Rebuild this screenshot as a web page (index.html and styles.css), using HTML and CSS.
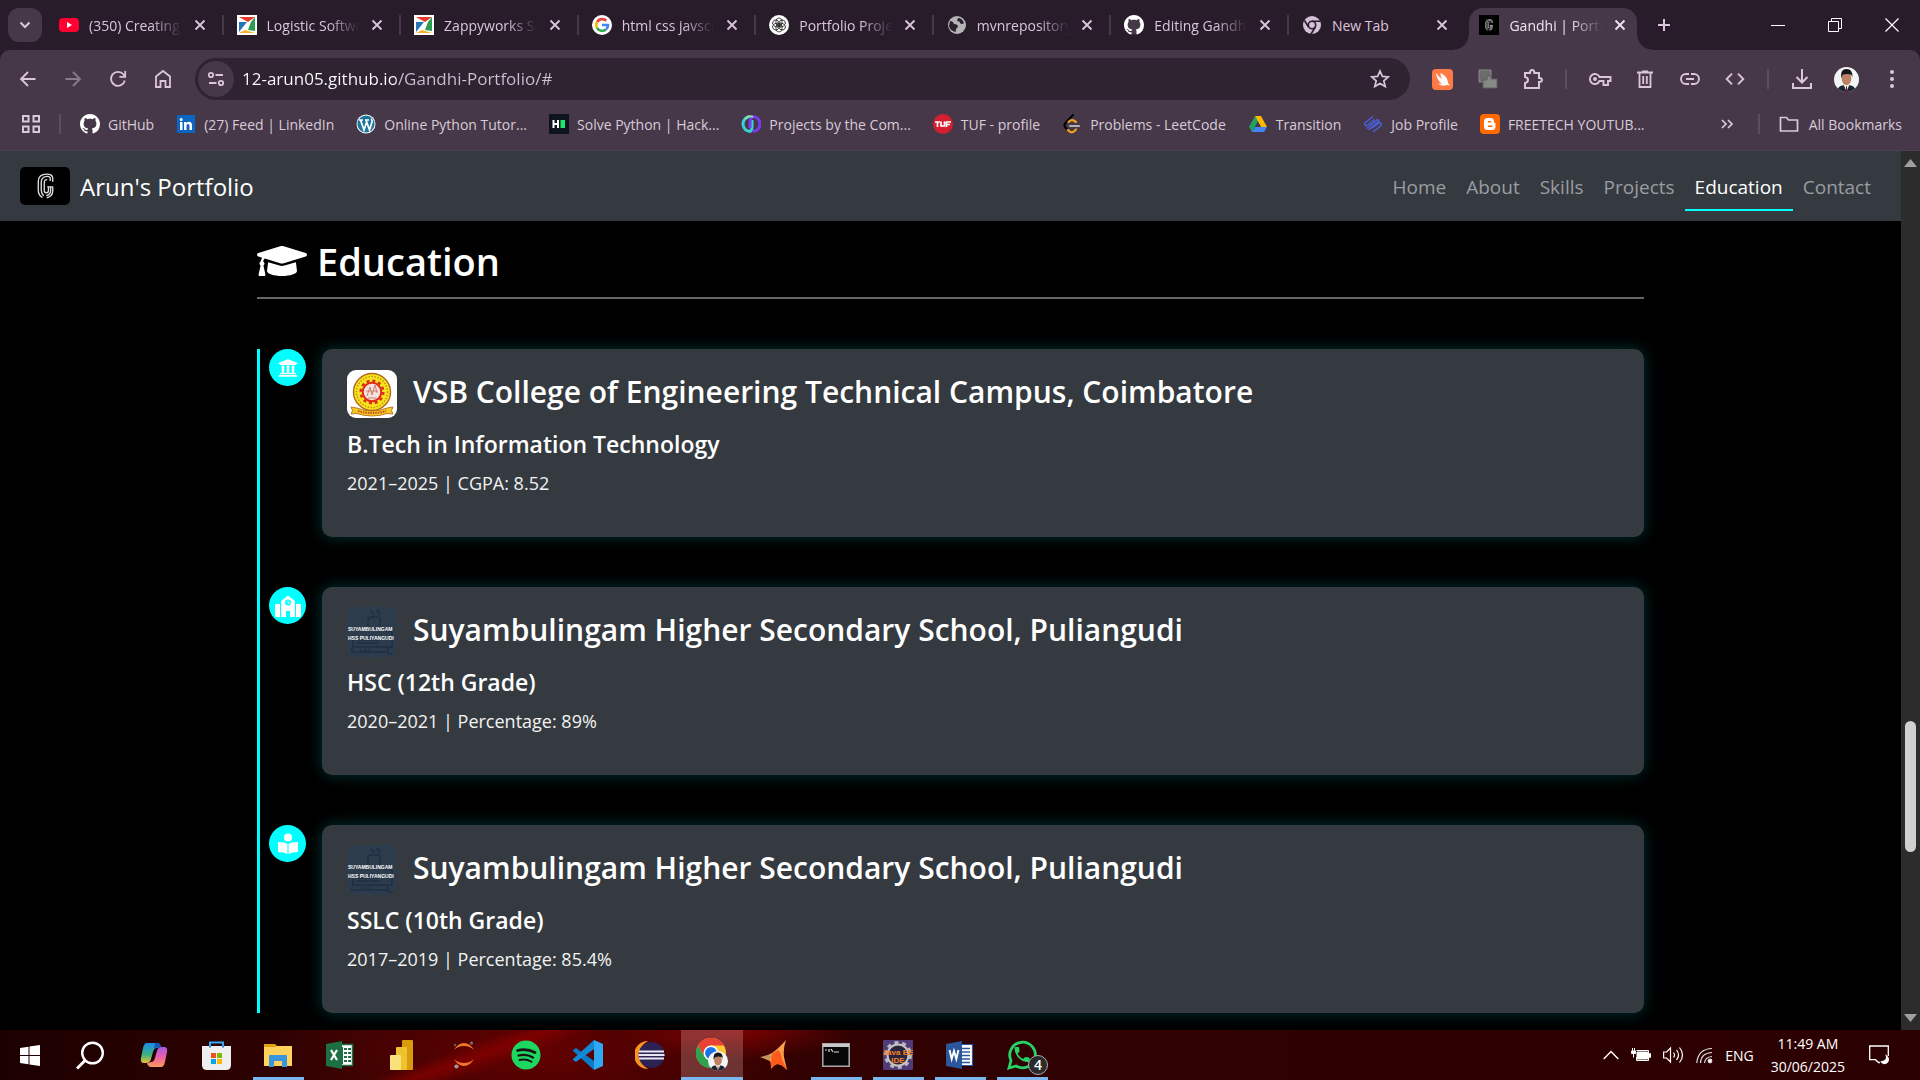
FILE: index.html
```html
<!DOCTYPE html>
<html lang="en">
<head>
<meta charset="utf-8">
<meta name="viewport" content="width=device-width, initial-scale=1">
<title>Gandhi | Portfolio</title>
<link rel="stylesheet" href="styles.css">
</head>
<body>
<svg class="defs" aria-hidden="true">
  <symbol id="i-close" viewBox="0 0 12 12"><path d="M1.5 1.5l9 9M10.500 1.500l-9 9" fill="none" stroke="currentColor" stroke-width="1.800"/></symbol>
  <symbol id="i-github" viewBox="0 0 16 16"><circle cx="8" cy="8" r="7.500" fill="#463848"/><path fill="#fff" d="M8 0C3.580 0 0 3.580 0 8c0 3.540 2.290 6.530 5.470 7.590.4.070.55-.17.55-.38 0-.19-.01-.82-.01-1.490-2.010.37-2.530-.49-2.690-.94-.09-.23-.48-.94-.82-1.130-.28-.15-.68-.52-.01-.53.63-.01 1.080.58 1.230.82.720 1.210 1.870.87 2.330.66.070-.52.280-.87.510-1.070-1.780-.2-3.640-.89-3.640-3.950 0-.87.310-1.590.82-2.150-.08-.2-.36-1.020.08-2.120 0 0 .67-.21 2.200.82.640-.18 1.320-.27 2-.27s1.360.09 2 .27c1.530-1.040 2.200-.82 2.200-.82.440 1.100.16 1.920.08 2.120.51.560.82 1.270.82 2.150 0 3.070-1.870 3.750-3.650 3.950.29.250.54.730.54 1.480 0 1.070-.01 1.930-.01 2.200 0 .21.150.46.550.38A8.010 8.010 0 0 0 16 8c0-4.420-3.580-8-8-8z"/></symbol>
  <symbol id="i-zappy" viewBox="0 0 20 20"><path fill="#fff" d="M0 0h20v20H0z"/><path fill="#e23b2e" d="M2 2h16l-7 5z"/><path fill="#2a9d4e" d="M18 2v14l-7-1 3-8z"/><path fill="#2476b8" d="M2 7v10l8-10z"/><path fill="#f3b229" d="M2 18l6-3 10 3z"/></symbol>
  <symbol id="i-g" viewBox="0 0 20 30"><g fill="none" stroke="#ddd" stroke-width="1.600"><path d="M18.500 10V6q0-5-7-5Q1.500 1 1.500 10v10q0 6 5 8.500"/><path d="M15.500 9V5Q13 3 10 4q-5 1-5 7v9q0 4 3 6.500"/><path d="M12 7.500Q8.500 7 8.500 12v8q0 3 2.500 3t2.500-3v-4"/><path d="M18.500 16v5q0 6-7 8M16 16v5q0 4-5 5.500M12 16h7"/></g></symbol>
  <symbol id="i-person" viewBox="0 0 26 26"><clipPath id="pc"><circle cx="13" cy="13" r="13"/></clipPath><g clip-path="url(#pc)"><path fill="#f4f5f6" d="M0 0h26v26H0z"/><path fill="#1b2431" d="M3 26q1-7 7-7h6q6 0 7 7z"/><path fill="#fff" d="M10 18h6l-3 8z"/><path fill="#6e1f25" d="M12.500 20h1l.5 6h-2z"/><ellipse cx="13" cy="12" rx="5" ry="7" fill="#bd8263"/><path fill="#16161a" d="M7.500 12Q6 2 13 2t6 9l-1-3q-4-1.500-9 0z"/></g></symbol>
  <symbol id="i-chrome" viewBox="0 0 32 32"><circle cx="16" cy="16" r="16" fill="#fcc934"/><path fill="#e94235" d="M2.100 8A16 16 0 0 1 29.900 8H16L9 20z"/><path fill="#2da34f" d="M2.100 8A16 16 0 0 0 16 32l7-12H9z"/><circle cx="16" cy="16" r="8" fill="#fff"/><circle cx="16" cy="16" r="6.300" fill="#1a73e8"/></symbol>
</svg>

<header class="browser">
  <div class="tabstrip">
    <button class="tab-search" aria-label="Search tabs"><svg width="12" height="8" viewBox="0 0 12 8"><path d="M1.500 1.500L6 6l4.500-4.500" fill="none" stroke="currentColor" stroke-width="2"/></svg></button>
    <div class="tabs">
      <div class="tab"><svg class="fav" viewBox="0 0 20 20"><rect y="3" width="20" height="14" rx="4" fill="#ff0033"/><path fill="#fff" d="M8 7l5 3-5 3z"/></svg><button class="tab-title">(350) Creating</button><button class="tab-close" aria-label="Close"><svg width="12" height="12"><use href="#i-close"/></svg></button></div>
      <div class="tab"><svg class="fav"><use href="#i-zappy"/></svg><button class="tab-title">Logistic Software</button><button class="tab-close" aria-label="Close"><svg width="12" height="12"><use href="#i-close"/></svg></button></div>
      <div class="tab"><svg class="fav"><use href="#i-zappy"/></svg><button class="tab-title">Zappyworks Sof</button><button class="tab-close" aria-label="Close"><svg width="12" height="12"><use href="#i-close"/></svg></button></div>
      <div class="tab"><svg class="fav" viewBox="0 0 20 20"><circle cx="10" cy="10" r="10" fill="#fff"/><g fill="none" stroke-width="2.600"><path stroke="#ea4335" d="M5 7a6 6 0 0 1 9.300-1.200"/><path stroke="#fbbc05" d="M5 13a6 6 0 0 1 0-6"/><path stroke="#34a853" d="M14 14.400A6 6 0 0 1 5 13"/><path stroke="#4285f4" d="M10 10h6a6 6 0 0 1-2 4.400"/></g></svg><button class="tab-title">html css javscript</button><button class="tab-close" aria-label="Close"><svg width="12" height="12"><use href="#i-close"/></svg></button></div>
      <div class="tab"><svg class="fav" viewBox="0 0 20 20"><circle cx="10" cy="10" r="10" fill="#fff"/><g fill="none" stroke="#222" stroke-width=".8"><ellipse cx="10" cy="7" rx="3.200" ry="4"/><ellipse cx="10" cy="13" rx="3.200" ry="4"/><ellipse cx="10" cy="7" rx="3.200" ry="4" transform="rotate(60 10 10)"/><ellipse cx="10" cy="13" rx="3.200" ry="4" transform="rotate(60 10 10)"/><ellipse cx="10" cy="7" rx="3.200" ry="4" transform="rotate(120 10 10)"/><ellipse cx="10" cy="13" rx="3.200" ry="4" transform="rotate(120 10 10)"/></g></svg><button class="tab-title">Portfolio Project</button><button class="tab-close" aria-label="Close"><svg width="12" height="12"><use href="#i-close"/></svg></button></div>
      <div class="tab"><svg class="fav" viewBox="0 0 20 20"><circle cx="10" cy="10" r="9" fill="#b5b5b5"/><path fill="#2b2230" d="M3 6q3 0 4 3 4 0 4 3-3 2-2 5-6-1-7-6zM11 3q4 0 6 5-2 2-4 0 0-2-3-2z"/></svg><button class="tab-title">mvnrepository</button><button class="tab-close" aria-label="Close"><svg width="12" height="12"><use href="#i-close"/></svg></button></div>
      <div class="tab"><svg class="fav"><use href="#i-github"/></svg><button class="tab-title">Editing Gandhi</button><button class="tab-close" aria-label="Close"><svg width="12" height="12"><use href="#i-close"/></svg></button></div>
      <div class="tab"><svg class="fav" viewBox="0 0 20 20"><circle cx="10" cy="10" r="9" fill="#d5bfd8"/><circle cx="10" cy="10" r="3.700" fill="none" stroke="#281c2b" stroke-width="1.600"/><path d="M10 6.200h8.500M6.600 12L2.400 5.500M13.300 12l-4.500 7.500" stroke="#281c2b" stroke-width="1.600"/></svg><button class="tab-title">New Tab</button><button class="tab-close" aria-label="Close"><svg width="12" height="12"><use href="#i-close"/></svg></button></div>
      <div class="tab active"><svg class="fav" viewBox="0 0 20 20"><path d="M0 0h20v20H0z"/><use href="#i-g" x="6" y="4" width="8" height="12"/></svg><button class="tab-title">Gandhi | Portfolio</button><button class="tab-close" aria-label="Close"><svg width="12" height="12"><use href="#i-close"/></svg></button></div>
    </div>
    <button class="new-tab" aria-label="New tab"><svg width="14" height="14" viewBox="0 0 14 14"><path d="M7 1v12M1 7h12" stroke="currentColor" stroke-width="2"/></svg></button>
    <div class="window-controls">
      <button aria-label="Minimize"><svg width="14" height="14"><path d="M0 7.500h14" stroke="#fff"/></svg></button>
      <button aria-label="Restore"><svg width="14" height="14" fill="none" stroke="#fff"><path d="M.5 3.500h10v10H.5zM3.500 3V.5h10v10H11"/></svg></button>
      <button aria-label="Close window"><svg width="14" height="14"><path d="M.5.5l13 13M13.500.5l-13 13" stroke="#fff" stroke-width="1.200"/></svg></button>
    </div>
  </div>

  <div class="toolbar">
    <button class="tool" aria-label="Back"><svg width="18" height="18" viewBox="0 0 18 18"><path d="M16.500 9H2M9 2L2 9l7 7" fill="none" stroke="currentColor" stroke-width="1.800"/></svg></button>
    <button class="tool dim" aria-label="Forward"><svg width="18" height="18" viewBox="0 0 18 18"><path d="M1.500 9H16M9 2l7 7-7 7" fill="none" stroke="currentColor" stroke-width="1.800"/></svg></button>
    <button class="tool" aria-label="Reload"><svg width="18" height="18" viewBox="0 0 18 18"><path d="M15.800 10.500A7 7 0 1 1 14.500 4.500l1.500 2M16.200 1v5.800h-5.800" fill="none" stroke="currentColor" stroke-width="1.800"/></svg></button>
    <button class="tool" aria-label="Home"><svg width="18" height="20" viewBox="0 0 18 20"><path d="M2 7.500L9 2l7 5.500V18h-4.500v-6h-5v6H2z" fill="none" stroke="currentColor" stroke-width="1.800"/></svg></button>
    <form class="omnibox">
      <button type="button" class="site-info" aria-label="Site information"><svg width="18" height="16" viewBox="0 0 18 16" fill="none" stroke="currentColor" stroke-width="1.800"><circle cx="4" cy="4" r="2.200"/><path d="M8.500 4H16M2 12h7.500"/><circle cx="14" cy="12" r="2.200"/></svg></button>
      <input class="url" type="text" aria-label="Address" value="12-arun05.github.io/Gandhi-Portfolio/#">
      <button type="button" class="star" aria-label="Bookmark this page"><svg width="20" height="20" viewBox="0 0 20 20"><path d="M10 2l2.400 5.400 5.900.5-4.500 3.900 1.400 5.800-5.200-3.100-5.200 3.100 1.400-5.800L1.700 7.900l5.900-.5z" fill="none" stroke="currentColor" stroke-width="1.700"/></svg></button>
    </form>
    <button class="tool" aria-label="Extension"><svg width="21" height="21" viewBox="0 0 21 21"><rect width="21" height="21" rx="4" fill="#ff7a45"/><path fill="#fff" d="M4 4q3 4 6 6Q8 6 8.500 4q5 2 7 7l.5 3 2 2.500-3.500-.5q-4 2-8.500-1.500l4 .2Q4.500 11 4 4z"/></svg></button>
    <button class="tool" aria-label="Extension"><svg width="20" height="20" viewBox="0 0 20 20"><path fill="#6c6c6c" stroke="#8a8a8a" d="M1 1h12v12H1z"/><path fill="#858a86" stroke="#5f5f5f" d="M9 7h4v3h6v9H5v-8h4z"/></svg></button>
    <button class="tool" aria-label="Extensions"><svg width="22" height="22" viewBox="0 0 22 22"><path d="M3 5h5q0-3 2.200-3t2.200 3H17v5q3 0 3 2t-3 2v6H3v-5q3-.5 3-3t-3-3z" fill="none" stroke="currentColor" stroke-width="2"/></svg></button>
    <span class="rule"></span>
    <button class="tool" aria-label="Passwords"><svg width="24" height="14" viewBox="0 0 24 14"><path d="M11.500 5H22.500v4H20v4h-4.500V9h-4A5 5 0 1 1 11.500 5z" fill="none" stroke="currentColor" stroke-width="1.900"/><circle cx="7" cy="7" r="2" fill="currentColor"/></svg></button>
    <button class="tool" aria-label="Delete browsing data"><svg width="16" height="19" viewBox="0 0 16 19"><path d="M0 2.500h16M5 1.500h6M2.500 3v14h11V3M6.200 6v8M9.800 6v8" fill="none" stroke="currentColor" stroke-width="1.800"/></svg></button>
    <button class="tool" aria-label="Copy link"><svg width="20" height="12" viewBox="0 0 20 12"><path d="M9 1H6a5 5 0 0 0 0 10h3M11 1h3a5 5 0 0 1 0 10h-3M6 6h8" fill="none" stroke="currentColor" stroke-width="1.900"/></svg></button>
    <button class="tool" aria-label="Developer tools"><svg width="20" height="12" viewBox="0 0 20 12"><path d="M7 .7L1.700 6 7 11.300M13 .7L18.300 6 13 11.300" fill="none" stroke="currentColor" stroke-width="1.900"/></svg></button>
    <span class="rule"></span>
    <button class="tool" aria-label="Downloads"><svg width="20" height="20" viewBox="0 0 20 20"><path d="M10 0v13M4.500 8l5.500 5.500L15.500 8M1 14v5h18v-5" fill="none" stroke="currentColor" stroke-width="2"/></svg></button>
    <button class="tool" aria-label="Profile"><svg width="25" height="25"><use href="#i-person"/></svg></button>
    <button class="tool" aria-label="Menu"><svg width="4" height="18" fill="currentColor"><circle cx="2" cy="2" r="2"/><circle cx="2" cy="9" r="2"/><circle cx="2" cy="16" r="2"/></svg></button>
  </div>

  <nav class="bookmarks" aria-label="Bookmarks">
    <button class="apps" aria-label="Apps"><svg width="18" height="18" fill="none" stroke="currentColor" stroke-width="2"><path d="M1 1h5.500v5.500H1zM11.500 1H17v5.500h-5.500zM1 11.500h5.500V17H1zM11.500 11.500H17V17h-5.500z"/></svg></button>
    <span class="rule"></span>
    <a href="#"><svg><use href="#i-github"/></svg>GitHub</a>
    <a href="#"><svg viewBox="0 0 20 20"><rect x="1" y="1" width="18" height="18" rx="1" fill="#0a66c2"/><path fill="#fff" d="M4 8h2.500v8H4zM8 8h2.300v1.200Q11 7.800 13 7.800q3 0 3 3.600V16h-2.500v-4.200q0-1.800-1.400-1.800-1.600 0-1.600 1.900V16H8z"/><circle cx="5.200" cy="5.400" r="1.500" fill="#fff"/></svg>(27) Feed | LinkedIn</a>
    <a href="#"><svg viewBox="0 0 20 20"><circle cx="10" cy="10" r="9.500" fill="#fff"/><circle cx="10" cy="10" r="8.600" fill="#1c769b"/><path d="M3 6h4M4.500 6l3.500 10L10.500 8.500M9 6h4M10 6l3.500 10L16 8q.5-2-1-3" fill="none" stroke="#fff" stroke-width="1.700"/></svg>Online Python Tutor...</a>
    <a href="#"><svg viewBox="0 0 20 20"><path fill="#0e141e" d="M0 0h20v20H0z"/><path d="M4.500 6v8M9 6v8M4.500 10H9" stroke="#fff" stroke-width="2"/><path fill="#1ee86b" d="M11.500 6H16v8h-4.500z"/></svg>Solve Python | Hack...</a>
    <a href="#"><svg viewBox="0 0 20 20" fill="none" stroke-width="3"><path stroke="#3ad2d8" d="M9 2.500a7 7.500 0 0 0 0 15q2-1 2-5V6"/><path stroke="#7a3cf0" d="M9 14V8q0-4 3-5.500a7 7.500 0 0 1 0 15"/><path stroke="#8de39b" stroke-width="2" d="M4 5q4-4 8-2"/></svg>Projects by the Com...</a>
    <a href="#"><svg viewBox="0 0 20 20"><circle cx="10" cy="10" r="10" fill="#d31f2f"/><path d="M2 8h5M4.500 8v5M8 7.500v4.500h3.500V7.500M13.500 13V8H18M13.500 10.500H17" fill="none" stroke="#fff" stroke-width="1.700"/></svg>TUF - profile</a>
    <a href="#"><svg viewBox="0 0 20 20" fill="none" stroke-width="2.200" stroke-linecap="round"><path stroke="#000" d="M11 1L3.500 9q-2 2 0 4.500L6 16"/><path stroke="#f5a01d" d="M6 16q3 4 6.500 1l1.500-1.500M6.500 8q3-3 6-1l1.500 1"/><path stroke="#b3b1b0" d="M8 12h9"/></svg>Problems - LeetCode</a>
    <a href="#"><svg viewBox="0 0 20 20"><path fill="#1ea362" d="M7 2L1 13l3 5 6-11z"/><path fill="#ffba00" d="M7 2h6l6 11h-6z"/><path fill="#4285f4" d="M7 13h12l-3 5H4z"/><path fill="#463848" d="M10 8l3 5H7.200z"/></svg>Transition</a>
    <a href="#"><svg viewBox="0 0 20 20" fill="none" stroke="#4a5fd8" stroke-width="1.500"><path d="M10 2.500L2.500 8.500q-2 3 1 3.500l8-6.500M4 14.500l10-8.500q2-1 1.500 1.500l-10 8.500M8.500 14.500l8-6q3 1 1 3.500L10 18"/></svg>Job Profile</a>
    <a href="#"><svg viewBox="0 0 20 20"><rect width="20" height="20" rx="4" fill="#ff6a00"/><path fill="#fff" fill-rule="evenodd" d="M7.500 4h3Q14 4 14 8q0 1 1.500 1v3.500q0 3.500-3.500 3.500H7.500Q4 16 4 12.500v-5Q4 4 7.500 4zm.5 3v1.500h3V7zm0 4.500V13h4.500v-1.500z"/></svg>FREETECH YOUTUB...</a>
    <button class="more" aria-label="More bookmarks"><svg width="12" height="10" fill="none" stroke="currentColor" stroke-width="1.700"><path d="M1 1l4 4-4 4M7 1l4 4-4 4"/></svg></button>
    <span class="rule"></span>
    <a class="all" href="#"><svg viewBox="0 0 20 20"><path d="M1.500 3.500h6l2 2.500h9v11h-17z" fill="none" stroke="currentColor" stroke-width="1.700"/></svg>All Bookmarks</a>
  </nav>
</header>

<div class="viewport">
  <div class="page">
    <nav class="navbar">
      <a class="brand" href="#"><span class="brand-logo"><svg width="17" height="26"><use href="#i-g"/></svg></span>Arun's Portfolio</a>
      <div class="nav-links">
        <a href="#">Home</a><a href="#">About</a><a href="#">Skills</a><a href="#">Projects</a><a class="current" href="#">Education</a><a href="#">Contact</a>
      </div>
    </nav>
    <main class="container">
      <h1 class="section-title"><svg width="50" height="40" viewBox="0 0 640 512"><path fill="#fff" d="M622.340 153.200L343.400 67.500c-15.200-4.670-31.600-4.670-46.790 0L17.660 153.200c-23.540 7.230-23.540 38.360 0 45.590l48.630 14.940c-10.670 13.190-17.230 29.280-17.880 46.900C38.780 266.150 32 276.110 32 288c0 10.780 5.680 19.850 13.860 25.650L20.330 428.530C18.110 438.520 25.710 448 35.940 448h56.110c10.240 0 17.840-9.480 15.620-19.470L82.140 313.650C90.320 307.850 96 298.780 96 288c0-11.570-6.470-21.250-15.660-26.870.76-15.020 8.440-28.300 20.690-36.720L296.600 284.500c9.060 2.780 26.440 6.250 46.790 0l278.950-85.700c23.550-7.240 23.550-38.360 0-45.600zM352.790 315.090c-28.530 8.760-52.840 3.920-65.590 0l-145.020-44.550L128 384c0 35.350 85.960 64 192 64s192-28.650 192-64l-14.180-113.470-145.030 44.560z"/></svg>Education</h1>
      <div class="timeline">
        <article class="entry">
          <span class="marker"><svg width="20" height="20" viewBox="0 0 512 512"><path fill="#fff" d="M496 128v16a8 8 0 0 1-8 8h-24v12c0 6.627-5.373 12-12 12H60c-6.627 0-12-5.373-12-12v-12H24a8 8 0 0 1-8-8v-16a8 8 0 0 1 4.941-7.392l232-88a7.996 7.996 0 0 1 6.118 0l232 88A8 8 0 0 1 496 128zm-24 304H40c-13.255 0-24 10.745-24 24v16a8 8 0 0 0 8 8h464a8 8 0 0 0 8-8v-16c0-13.255-10.745-24-24-24zM96 192v192H60c-6.627 0-12 5.373-12 12v20h416v-20c0-6.627-5.373-12-12-12h-36V192h-64v192h-64V192h-64v192h-64V192H96z"/></svg></span>
          <div class="card">
            <h2><svg class="logo" viewBox="0 0 50 48"><rect width="50" height="48" rx="9" fill="#fff"/><circle cx="25" cy="22" r="18.500" fill="#f6e51c" stroke="#b5651d" stroke-width="1.400"/><circle cx="25" cy="22" r="15.500" fill="none" stroke="#c99112" stroke-width="1.500" stroke-dasharray="1.500 1.500"/><circle cx="25" cy="22" r="11.300" fill="none" stroke="#e02a1c" stroke-width="2.500" stroke-dasharray="3 2.920"/><circle cx="25" cy="22" r="9.300" fill="#f3e3dc" stroke="#e02a1c" stroke-width="2"/><path d="M20 26l3-9 2 8 3-10 2 8M19 21h12M21 28h8" fill="none" stroke="#d08078" stroke-width="1"/><path fill="#f6c81c" stroke="#a8641c" stroke-width=".8" d="M4 37l6 1q15 6 30 0l6-1-1.500 3.500L46 44l-6-.5q-15 5-30 0L4 44l1.500-3.500z"/><path d="M11 41q14 4 28 0" fill="none" stroke="#c0502a" stroke-width="2" stroke-dasharray="1.500 1"/></svg>VSB College of Engineering Technical Campus, Coimbatore</h2>
            <h3>B.Tech in Information Technology</h3>
            <p>2021–2025 | CGPA: 8.52</p>
          </div>
        </article>
        <article class="entry">
          <span class="marker"><svg width="26" height="22" viewBox="0 0 26 22"><path fill="#fff" fill-rule="evenodd" d="M6 6l7-5.500L20 6v16h-5v-6h-4v6H6zM13 4.500a3 3 0 1 0 0 6 3 3 0 0 0 0-6z"/><path fill="#fff" d="M1 9h4v13H1q-1 0-1-1V10q0-1 1-1zM21 9h4q1 0 1 1v11q0 1-1 1h-4z"/><path d="M13 5.500V8h1.500" fill="none" stroke="#fff"/></svg></span>
          <div class="card">
            <h2><svg class="logo" viewBox="0 0 50 50"><g id="school-logo"><rect width="50" height="50" rx="9" fill="#2d3c4c"/><g fill="none" stroke="#1f2e40" stroke-width="1.500"><rect x="21" y="10" width="12" height="11" rx="3"/><path d="M24 4l3 4M29 4h3v4M38 24h7v16h-5M6 28v12h34M10 33h22M10 36h22M5 41v4h36v-4M14 44v-2M18 44v-2M22 44v-2M40 47h6"/></g><g fill="#fff" class="logo-text"><text x="1" y="24">SUYAMBULINGAM</text><text x="1" y="33">HSS PULIYANGUDI</text></g></g></svg>Suyambulingam Higher Secondary School, Puliangudi</h2>
            <h3>HSC (12th Grade)</h3>
            <p>2020–2021 | Percentage: 89%</p>
          </div>
        </article>
        <article class="entry">
          <span class="marker"><svg width="20" height="22" viewBox="0 0 20 22"><circle cx="10" cy="4.500" r="4" fill="#fff"/><path fill="#fff" d="M0 9q6-.5 9.500 2v10Q6 19 0 19zM20 9q-6-.5-9.500 2v10Q14 19 20 19z"/></svg></span>
          <div class="card">
            <h2><svg class="logo" viewBox="0 0 50 50"><use href="#school-logo"/></svg>Suyambulingam Higher Secondary School, Puliangudi</h2>
            <h3>SSLC (10th Grade)</h3>
            <p>2017–2019 | Percentage: 85.4%</p>
          </div>
        </article>
      </div>
    </main>
  </div>
  <div class="scrollbar">
    <svg width="13" height="8"><path d="M0 8l6.500-8L13 8z" fill="#a0a0a0"/></svg>
    <span class="track-above"></span><span class="thumb"></span><span class="track-below"></span>
    <svg width="13" height="8"><path d="M0 0l6.500 8L13 0z" fill="#a0a0a0"/></svg>
  </div>
</div>

<footer class="taskbar">
  <button class="start" aria-label="Start"><svg width="20" height="21" viewBox="0 0 20 21" fill="#fff"><path d="M0 3l8.500-1.200V10H0zM9.500 1.600L20 0v10H9.500zM0 11h8.500v8.200L0 18zM9.500 11H20v10L9.500 19.400z"/></svg></button>
  <button class="start" aria-label="Search"><svg width="28" height="29" viewBox="0 0 28 29" fill="none" stroke="#fff"><circle cx="16.500" cy="12" r="10.300" stroke-width="2.400"/><path d="M9 19.500l-8 8" stroke-width="3"/></svg></button>
  <button class="app" aria-label="Copilot"><svg width="28" height="26" viewBox="0 0 28 26"><defs><linearGradient id="cp1" x1="0" y1="0" x2="0" y2="1"><stop offset="0" stop-color="#1b8de8"/><stop offset=".6" stop-color="#3fb27f"/><stop offset="1" stop-color="#f2c230"/></linearGradient><linearGradient id="cp2" x1="0" y1="0" x2="0" y2="1"><stop offset="0" stop-color="#a35be8"/><stop offset=".5" stop-color="#ec5fa8"/><stop offset="1" stop-color="#ff9a5a"/></linearGradient></defs><path fill="url(#cp1)" d="M7 1h10q3 0 4 4l-4 1q-3 0-4 4l-2 7q-1 4-5 4H4q-4 0-3-5L3 6q1-5 4-5z"/><path fill="url(#cp2)" d="M21 25H11q-3 0-4-4l4-1q3 0 4-4l2-7q1-4 5-4h2q4 0 3 5l-2 10q-1 5-4 5z"/><path fill="#1556c0" d="M15 1h2q3 0 4 4l-4 .5q-2 0-3 2z"/></svg></button>
  <button class="app" aria-label="Microsoft Store"><svg width="29" height="29" viewBox="0 0 29 29"><path d="M8 8V1.500h13V8" fill="none" stroke="#38a9f0" stroke-width="2"/><path fill="#efefef" d="M0 5h29v19q0 5-5 5H5q-5 0-5-5z"/><path d="M8 5v1.500M21 5v1.500" stroke="#2a86c8" stroke-width="2"/><path fill="#f25022" d="M9 12h5v5H9z"/><path fill="#7fba00" d="M15 12h5v5h-5z"/><path fill="#00a4ef" d="M9 18h5v5H9z"/><path fill="#ffb900" d="M15 18h5v5h-5z"/></svg></button>
  <button class="app running" aria-label="File Explorer"><svg width="28" height="24" viewBox="0 0 28 24"><path fill="#e0a30d" d="M0 1h11l2 2v6H0z"/><path fill="#ffd25e" d="M0 4h11l2-1h15v20H0z"/><path fill="#3b95dd" d="M5 13q0-1 1-1h16q1 0 1 1v11h-5v-6h-8v6H5z"/></svg></button>
  <button class="app" aria-label="Excel"><svg width="28" height="28" viewBox="0 0 28 28"><path fill="#fff" stroke="#1d7044" stroke-width="1.500" d="M13 3.500h13.500v21H13z"/><path d="M16 6v17M18 8h3M22 8h3M18 12h3M22 12h3M18 16h3M22 16h3M18 20h3M22 20h3" stroke="#1d7044" stroke-width="2"/><path fill="#1d7044" d="M0 3l16-3v28L0 25z"/><path d="M5 9l6 10M11 9L5 19" stroke="#fff" stroke-width="2.200"/></svg></button>
  <button class="app" aria-label="Power BI"><svg width="24" height="30" viewBox="0 0 24 30"><rect x="12" width="11" height="30" rx="1" fill="#d99a0b"/><rect x="6" y="7" width="11" height="23" rx="1" fill="#efc22f"/><rect y="15" width="11" height="15" rx="1" fill="#f9e27a"/></svg></button>
  <button class="app" aria-label="Jupyter"><svg width="22" height="28" viewBox="0 0 22 28"><path fill="#f37726" d="M1 9q4-7 10-7t10 7q-4-4-10-4T1 9zM1 18q4 7 10 7t10-7q-4 4-10 4t-10-4z"/><circle cx="18.500" cy="2" r="1.600" fill="#767677"/><circle cx="2" cy="4" r="1.200" fill="#616262"/><circle cx="3.500" cy="25.500" r="2.100" fill="#9e9e9e"/></svg></button>
  <button class="app" aria-label="Spotify"><svg width="30" height="30" viewBox="0 0 30 30"><circle cx="15" cy="15" r="14.500" fill="#1ed760"/><g fill="none" stroke="#191414" stroke-linecap="round"><path d="M6.500 10.500q9-2.600 17.500 2" stroke-width="2.700"/><path d="M7.500 15.500q8-2 14.500 2" stroke-width="2.300"/><path d="M8.500 20q6.500-1.600 12 1.700" stroke-width="1.900"/></g></svg></button>
  <button class="app" aria-label="Visual Studio Code"><svg width="30" height="30" viewBox="0 0 30 30"><path fill="#0a7dc9" d="M0 10l3-2 18 13v9L0 11z"/><path fill="#1487d6" d="M0 20l3 2L21 9V0L0 19z"/><path fill="#2fa9f2" d="M21 0l9 4v22l-9 4z"/></svg></button>
  <button class="app" aria-label="Eclipse"><svg width="30" height="30" viewBox="0 0 30 30"><path fill="#f7941e" d="M13 1a14 14 0 0 0 0 28A16 16 0 0 1 13 1z"/><circle cx="16.500" cy="15" r="13" fill="#2c2255"/><path d="M4 11.500h25M3.500 15h26M4 18.500h25" stroke="#e8e6f2" stroke-width="2"/></svg></button>
  <button class="app running focused" aria-label="Google Chrome"><svg width="32" height="34" viewBox="0 0 32 34"><use href="#i-chrome" width="30" height="30"/><use href="#i-person" x="12" y="13" width="20" height="20"/></svg></button>
  <button class="app" aria-label="MATLAB"><svg width="28" height="30" viewBox="0 0 28 30"><path fill="#f7a24b" d="M26 0q-3 8-2 17l3 13q-5-6-10-6-3 1-6 5 0-6-1-8L0 17q7-1 12-4 6-4 14-13z"/><path fill="#ff5a1c" d="M12 14l6-4q3 2 4 9l5 11q-5-6-10-6-3 1-6 4v-7z"/><path fill="#5f7f8a" d="M0 17q5-1 10-3l2 3-3 3z" opacity=".35"/></svg></button>
  <button class="app running" aria-label="Command Prompt"><svg width="28" height="24" viewBox="0 0 28 24"><path fill="#070707" stroke="#a9a9a9" stroke-width="1.500" d="M.8.8h26.400v22.400H.8z"/><path fill="#c9c9c9" d="M1 1h26v3H1z"/><path d="M3 7h2M7 6v3M9 6l2 3M12 9h5" stroke="#ddd" stroke-width="1.200"/></svg></button>
  <button class="app running" aria-label="Java EE IDE"><svg width="30" height="30" viewBox="0 0 30 30"><rect width="30" height="30" rx="1" fill="#513a78"/><circle cx="15" cy="15" r="12.500" fill="none" stroke="#b9b9b9" stroke-width="3" stroke-dasharray="4 3.850"/><circle cx="15" cy="15" r="10.500" fill="#2c2340" stroke="#c4c4c4" stroke-width="2"/><g class="ide-text" fill="#f58220"><text x="15" y="15">Java EE</text><text x="15" y="23">IDE</text></g></svg></button>
  <button class="app running" aria-label="Word"><svg width="28" height="28" viewBox="0 0 28 28"><path fill="#fff" stroke="#2b579a" stroke-width="1.200" d="M13 3.500h13.500v21H13z"/><path d="M16 7.500h8M16 11h8M16 14.500h8M16 18h8M16 21.500h8" stroke="#2b579a" stroke-width="1.600"/><path fill="#2b579a" d="M0 3l16-3v28L0 25z"/><path d="M3.500 9l2.200 9L8 10l2.300 8 2.200-9" fill="none" stroke="#fff" stroke-width="1.900"/></svg></button>
  <button class="app running whatsapp" aria-label="WhatsApp"><svg width="30" height="30" viewBox="0 0 30 30"><path d="M2 28l2-7.500A12.800 12.800 0 1 1 9 26z" fill="none" stroke="#25d366" stroke-width="2.800"/><path fill="#25d366" transform="translate(5 4.500) scale(.84)" d="M6.620 10.790c1.440 2.830 3.760 5.140 6.590 6.590l2.200-2.200c.27-.27.67-.36 1.020-.24 1.120.37 2.330.57 3.570.57.550 0 1 .45 1 1V20c0 .55-.45 1-1 1-9.390 0-17-7.610-17-17 0-.55.450-1 1-1h3.500c.55 0 1 .45 1 1 0 1.250.2 2.450.57 3.570.11.350.03.740-.25 1.020l-2.200 2.200z"/></svg><span class="badge">4</span></button>
  <div class="tray">
    <button aria-label="Show hidden icons"><svg width="16" height="10"><path d="M.7 9L8 1.500 15.300 9" fill="none" stroke="#fff" stroke-width="1.400"/></svg></button>
    <button aria-label="Battery"><svg width="20" height="14" fill="none" stroke="#fff"><path d="M5.500 2.500h12v10h-12V9M18.500 5.500v4h1v-4z"/><path fill="#fff" d="M6 4h10.500v7H6z"/><path fill="#fff" d="M.5 3h4v2.500h-4zM1.500 3V0M3.500 3V0M2.500 6v3.500"/></svg></button>
    <button aria-label="Volume"><svg width="21" height="18" fill="none" stroke="#fff" stroke-width="1.200"><path d="M.6 6h3L7.500 2v14l-3.900-4h-3zM10.500 6.500q2 2.500 0 5M13.500 4q4 5 0 10M16.500 1.500q6 7.500 0 15"/></svg></button>
    <button aria-label="Wi-Fi"><svg width="17" height="17" fill="none" stroke="#ddd" stroke-width="1.200"><path d="M.8 16Q2 2 16 1.500M4.500 16Q5 6 16 5.500M8.500 16Q9 10 16 9.500"/><circle cx="14" cy="14" r="1.800" fill="#fff"/></svg></button>
    <button class="lang">ENG</button>
    <button class="clock"><span>11:49 AM</span><span>30/06/2025</span></button>
    <button class="notify" aria-label="Notifications"><svg width="20" height="20" fill="none" stroke="#fff" stroke-width="1.300"><path d="M11 17.500H9.500l-3-2.800H.7V1h18.600v10"/><path fill="#fff" d="M17.500 11q1 5-5 6 3 3 6 0 2-3-1-6z"/></svg></button>
  </div>
</footer>
</body>
</html>
```
FILE: styles.css
```css
:root {
  --ui: "Open Sans", "Noto Sans", sans-serif;
  --frame: #281c2b;
  --toolbar: #463848;
  --field: #2f2332;
  --icon: #dcc5dc;
  --panel: #353a40;
  --accent: #00ffff;
}

* { box-sizing: border-box; }

body {
  margin: 0;
  min-height: 100vh;
  display: flex;
  flex-direction: column;
  background: #000;
  color: #fff;
  font-family: var(--ui);
}

button {
  padding: 0;
  border: 0;
  background: none;
  color: inherit;
  font: inherit;
}

a { color: inherit; text-decoration: none; }
svg { display: block; flex: none; }
.defs { position: absolute; width: 0; height: 0; }
.logo-text { font: bold 5px "Liberation Sans Narrow", "Liberation Sans", sans-serif; }
.ide-text { font: bold 8px "Liberation Sans", sans-serif; text-anchor: middle; }

/* Browser frame */
.browser { background: var(--frame); color: var(--icon); }

.tabstrip { display: flex; height: 50px; align-items: center; font-size: 14px; }

.tab-search {
  width: 34px;
  height: 34px;
  margin: 0 4px 0 8px;
  border-radius: 11px;
  background: var(--toolbar);
  display: grid;
  place-items: center;
}

.tabs {
  flex: 1;
  min-width: 0;
  height: 50px;
  display: grid;
  grid-template-columns: repeat(9, 1fr);
}

.tab {
  position: relative;
  min-width: 0;
  display: flex;
  align-items: center;
  gap: 10px;
  padding: 0 18px 0 13px;
}

.tab::after {
  content: "";
  position: absolute;
  right: 0;
  width: 2px;
  height: 20px;
  background: #463848;
}

.fav { width: 20px; height: 20px; z-index: 1; }

.tab-title {
  flex: 1;
  min-width: 0;
  overflow: hidden;
  white-space: nowrap;
  text-align: left;
  z-index: 1;
  mask-image: linear-gradient(90deg, #000 65%, transparent 98%);
}

.tab-close { z-index: 1; }

.tab:nth-child(8)::after { display: none; }
.tab:nth-child(8) .tab-title { mask-image: none; }
.tab.active { color: #f0e4f0; }

.tab.active::after {
  inset: 8px 7px 0 3px;
  width: auto;
  height: auto;
  border-radius: 14px 14px 0 0;
  background: var(--toolbar);
}

.tab.active::before {
  content: "";
  position: absolute;
  inset: auto -8px 0 -12px;
  height: 15px;
  background:
    radial-gradient(circle at 0 0, transparent 14px, var(--toolbar) 15px) left / 15px 15px no-repeat,
    radial-gradient(circle at 100% 0, transparent 14px, var(--toolbar) 15px) right / 15px 15px no-repeat;
}

.new-tab { width: 36px; margin-left: 2px; display: grid; place-items: center; }
.window-controls { display: flex; margin-left: 67px; }
.window-controls button { width: 57px; height: 50px; display: grid; place-items: center; }

.toolbar {
  display: flex;
  align-items: center;
  height: 58px;
  padding: 0 6px 0 5px;
  border-radius: 10px 10px 0 0;
  background: var(--toolbar);
}

.tool { width: 45px; height: 45px; display: grid; place-items: center; }
.dim { color: #8c7a8e; }
.rule { width: 2px; height: 20px; margin: 0 10px; background: #5e4c62; }

.omnibox {
  flex: 1;
  min-width: 0;
  height: 42px;
  margin: 0 10px;
  padding: 0 20px 0 3px;
  border-radius: 21px;
  background: var(--field);
  display: flex;
  align-items: center;
}

.site-info {
  width: 36px;
  height: 36px;
  border-radius: 50%;
  background: var(--toolbar);
  display: grid;
  place-items: center;
}

.url {
  flex: 1;
  min-width: 0;
  margin-left: 8px;
  padding: 0;
  border: 0;
  outline: 0;
  font: 17px/24px var(--ui);
  color: transparent;
  background: linear-gradient(90deg, #fff 154px, #cdc0d0 154px);
  background-clip: text;
  -webkit-background-clip: text;
}

.bookmarks {
  display: flex;
  align-items: center;
  gap: 22px;
  height: 43px;
  padding: 0 18px 10px 22px;
  background: var(--toolbar);
  color: #d8cbd9;
  font-size: 14px;
  white-space: nowrap;
  border-bottom: 1px solid #4f4052;
}

.bookmarks .rule { margin: 0 -3px; }
.bookmarks a { display: flex; align-items: center; gap: 8px; }
.bookmarks a svg { width: 20px; height: 20px; }
.bookmarks .more { margin: 0 6px 0 auto; }
.bookmarks .all { gap: 10px; }

/* Page */
.viewport { flex: 1; display: flex; }
.page { flex: 1; min-width: 0; }

.navbar {
  display: flex;
  align-items: center;
  justify-content: space-between;
  height: 70px;
  padding: 0 20px;
  background: var(--panel);
}

.brand { display: flex; align-items: center; gap: 10px; font-size: 24px; }

.brand-logo {
  width: 50px;
  height: 38px;
  border-radius: 5px;
  background: #000;
  display: grid;
  place-items: center;
}

.nav-links { display: flex; font-size: 19px; color: #9a9da0; }
.nav-links a { padding: 11px 10px 7px; line-height: 30px; border-bottom: 2px solid transparent; }
.nav-links .current { color: #fff; border-color: var(--accent); }

.container { max-width: 1387px; margin: 0 auto; }

.section-title {
  display: flex;
  align-items: center;
  gap: 10px;
  margin: 0 0 50px;
  padding: 16px 0 12px;
  border-bottom: 2px solid #666;
  font-size: 38px;
  line-height: 48px;
  font-weight: 600;
}

.timeline {
  display: flex;
  flex-direction: column;
  gap: 50px;
  border-left: 3px solid var(--accent);
  padding-left: 9px;
}

.entry { display: flex; align-items: flex-start; gap: 16px; }

.marker {
  flex: none;
  width: 37px;
  height: 37px;
  border-radius: 50%;
  background: var(--accent);
  display: grid;
  place-items: center;
}

.card {
  flex: 1;
  padding: 20px 25px 39px;
  border-radius: 10px;
  background: var(--panel);
  box-shadow: 0 0 15px rgba(0, 255, 255, .2);
}

.card h2, .card h3, .card p { margin: 0; font-weight: 600; }
.card h2 { display: flex; align-items: flex-start; gap: 16px; font-size: 30px; line-height: 46px; }
.card h3 { margin-top: 10px; font-size: 23px; line-height: 30px; }
.card p { margin-top: 9px; font-size: 18px; line-height: 30px; font-weight: 500; color: #f2f2f2; }
.logo { width: 50px; height: 50px; }

.scrollbar {
  width: 19px;
  padding: 8px 0;
  background: #2c2c2c;
  display: flex;
  flex-direction: column;
  align-items: center;
}

.track-above { flex: 554; }
.thumb { flex: 131; width: 11px; border-radius: 6px; background: #d0d0d0; }
.track-below { flex: 162; }

/* Taskbar */
.taskbar {
  display: flex;
  height: 50px;
  background:
    radial-gradient(ellipse 120px 30px at 735px 0, rgba(190, 0, 0, .5), transparent),
    linear-gradient(160deg, transparent 40%, rgba(150, 0, 0, .6) 50%, transparent 62%) 340px 0 / 280px 50px no-repeat,
    radial-gradient(ellipse 260px 90px at 540px 20px, rgba(120, 0, 0, .7), transparent),
    linear-gradient(90deg, #1c0000, #350202 20%, #300101 50%, #2c0101);
}

.taskbar button { display: grid; place-items: center; flex: none; }
.taskbar .start { width: 60px; }
.taskbar .app { width: 62px; }
.taskbar .start + .app { margin-left: 3px; }
.taskbar .running { background: linear-gradient(#7ab7ee, #7ab7ee) center bottom / 51px 3px no-repeat; }
.taskbar .focused { background: linear-gradient(#7ab7ee, #7ab7ee) center bottom / 62px 3px no-repeat, rgba(255, 200, 200, .25); }
.whatsapp { position: relative; }

.badge {
  position: absolute;
  right: 5px;
  bottom: 5px;
  width: 20px;
  height: 20px;
  border: 1px solid #aaa;
  border-radius: 50%;
  background: #2b2b2b;
  font-size: 14px;
  line-height: 18px;
  font-weight: 600;
}

.tray {
  display: flex;
  align-items: center;
  gap: 12px;
  margin-left: auto;
  padding-right: 31px;
  font-size: 14px;
}

.taskbar .clock { margin: 0 12px 0 5px; line-height: 23px; }
```
